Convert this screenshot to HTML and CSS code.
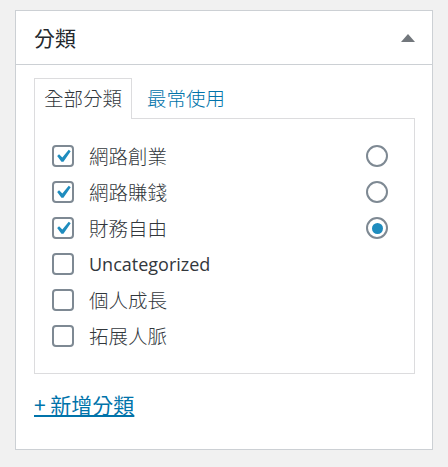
FILE: index.html
```html
<!DOCTYPE html>
<html lang="zh-Hant">
<head>
<meta charset="utf-8">
<link rel="stylesheet" href="styles.css">
</head>
<body>
<div class="box">
  <div class="box-head">
    <h2 class="box-title">分類</h2>
    <span class="toggle"></span>
  </div>
  <div class="box-body">
    <ul class="tabs">
      <li class="tab active">全部分類</li>
      <li class="tab">最常使用</li>
    </ul>
    <div class="panel">
      <ul class="cats">
        <li class="cat"><span class="cb"><svg viewBox="0 0 20 20"><path d="M15.2 4.4l1.8 1.3-6.6 9.5H8.6L4.7 10.1l1.7-1.6 3 2.8z"/></svg></span><span class="label">網路創業</span><span class="radio"></span></li>
        <li class="cat"><span class="cb"><svg viewBox="0 0 20 20"><path d="M15.2 4.4l1.8 1.3-6.6 9.5H8.6L4.7 10.1l1.7-1.6 3 2.8z"/></svg></span><span class="label">網路賺錢</span><span class="radio"></span></li>
        <li class="cat"><span class="cb"><svg viewBox="0 0 20 20"><path d="M15.2 4.4l1.8 1.3-6.6 9.5H8.6L4.7 10.1l1.7-1.6 3 2.8z"/></svg></span><span class="label">財務自由</span><span class="radio on"></span></li>
        <li class="cat"><span class="cb"></span><span class="label latin">Uncategorized</span></li>
        <li class="cat"><span class="cb"></span><span class="label">個人成長</span></li>
        <li class="cat"><span class="cb"></span><span class="label">拓展人脈</span></li>
      </ul>
    </div>
    <a class="add" href="#">+ 新增分類</a>
  </div>
</div>
</body>
</html>
```

FILE: styles.css
```css
* { box-sizing: border-box; }
html, body { margin: 0; padding: 0; }
body {
  background: #f1f1f1;
  padding: 10px 15px;
  font-family: "Noto Sans CJK TC", "Noto Sans", sans-serif;
  color: #32373c;
}
.box {
  width: 418px;
  height: 440px;
  background: #fff;
  border: 1px solid #ccd0d4;
}
.box-head {
  height: 54px;
  border-bottom: 1px solid #ccd0d4;
  display: flex;
  align-items: center;
  justify-content: space-between;
  padding: 0 17px 0 18px;
}
.box-title {
  margin: 0;
  font-size: 21px;
  font-weight: 400;
  color: #23282d;
  line-height: 1;
}
.toggle {
  width: 0;
  height: 0;
  border-left: 7px solid transparent;
  border-right: 7px solid transparent;
  border-bottom: 8px solid #72777c;
}
.box-body {
  padding: 13px 17px 0 18px;
}
.tabs {
  list-style: none;
  margin: 0;
  padding: 0;
  display: flex;
  gap: 5px;
  height: 40px;
  position: relative;
  z-index: 1;
}
.tab {
  font-size: 19.5px;
  font-weight: 300;
  line-height: 38px;
  padding: 0 9px;
  color: #0073aa;
  border: 1px solid transparent;
  border-bottom: 0;
}
.tab.active {
  color: #32373c;
  border-color: #dcdcde;
  background: #fff;
  height: 41px;
}
.panel {
  border: 1px solid #dcdcde;
  height: 256px;
  padding: 19px 26px 0 17px;
}
.cats { list-style: none; margin: 0; padding: 0; }
.cat {
  display: flex;
  align-items: center;
  height: 36px;
}
.cb {
  width: 22px;
  height: 22px;
  border: 2px solid #7e8993;
  border-radius: 4px;
  margin-right: 15px;
  flex: none;
  display: flex;
  align-items: center;
  justify-content: center;
}
.cb svg {
  width: 22px;
  height: 22px;
  fill: #1e8cbe;
  flex: none;
}
.label {
  font-size: 19.5px;
  font-weight: 300;
  flex: 1;
  line-height: 1;
}
.label.latin {
  font-family: "Open Sans", "Noto Sans", sans-serif;
  font-weight: 400;
  font-size: 18px;
}
.radio {
  width: 22px;
  height: 22px;
  border: 2px solid #7e8993;
  border-radius: 50%;
  flex: none;
  display: flex;
  align-items: center;
  justify-content: center;
}
.radio.on::after {
  content: "";
  width: 11px;
  height: 11px;
  border-radius: 50%;
  background: #1e8cbe;
}
.add {
  display: inline-block;
  margin-top: 18px;
  font-size: 21px;
  color: #0073aa;
  text-decoration: underline;
  line-height: 24px;
}
```
